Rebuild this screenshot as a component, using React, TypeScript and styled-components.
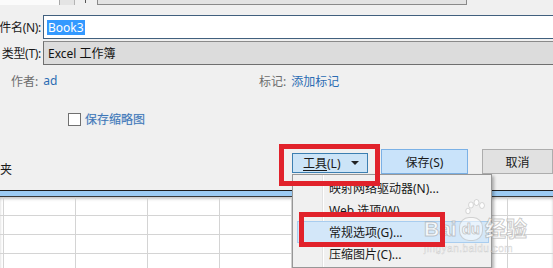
import styled, { createGlobalStyle } from 'styled-components'

const GlobalStyle = createGlobalStyle`
	html, body {
		margin: 0;
		padding: 0;
		background: #ffffff;
	}
	body {
		font-family: 'Noto Sans', 'Noto Sans CJK SC', sans-serif;
		font-size: 12px;
		color: #1a1a1a;
	}
`

const menuItems = ['映射网络驱动器(N)...', 'Web 选项(W)...', '常规选项(G)...', '压缩图片(C)...']

const App = (): JSX.Element => {
	return (
		<Page>
			<GlobalStyle />
			<Dialog>
				<TopStrip>
					<StripWhite />
					<StripButton />
					<StripArrow />
					<StripBox />
				</TopStrip>

				<FieldRow $first>
					<FieldLabel>件名(N):</FieldLabel>
					<NameInput>
						<Selected>Book3</Selected>
					</NameInput>
				</FieldRow>

				<FieldRow>
					<FieldLabel>类型(T):</FieldLabel>
					<TypeSelect>Excel 工作簿</TypeSelect>
				</FieldRow>

				<MetaRow>
					<MetaField $width={248}>
						<MetaLabel>作者:</MetaLabel>
						<MetaLink>ad</MetaLink>
					</MetaField>
					<MetaField>
						<MetaLabel>标记:</MetaLabel>
						<MetaLink>添加标记</MetaLink>
					</MetaField>
				</MetaRow>

				<CheckRow>
					<CheckBox />
					<CheckLabel>保存缩略图</CheckLabel>
				</CheckRow>

				<Footer>
					<HideFolders>夹</HideFolders>
					<ToolsButton>
						<ToolsText>工具</ToolsText>(L)
						<Caret />
					</ToolsButton>
					<SaveButton>保存(S)</SaveButton>
					<CancelButton>取消</CancelButton>
				</Footer>
			</Dialog>

			<Band />

			<Sheet>
				{Array.from({ length: 45 }).map((_, i) => (
					<Cell key={i} />
				))}
			</Sheet>

			<Menu>
				{menuItems.map((item, i) => (
					<MenuItem key={item} $active={i === 2}>
						{item}
					</MenuItem>
				))}
			</Menu>

			<Watermark>
				<Paw viewBox="0 0 24 24">
					<ellipse cx="7" cy="7" rx="2.4" ry="3" />
					<ellipse cx="12.5" cy="4.5" rx="2.4" ry="3" />
					<ellipse cx="18" cy="7.5" rx="2.4" ry="3" />
					<ellipse cx="4" cy="13" rx="2.2" ry="2.8" />
				</Paw>
				<WatermarkBrand>
					Bai<DuMark>du</DuMark>经验
				</WatermarkBrand>
				<WatermarkUrl>jingyan.baidu.com</WatermarkUrl>
			</Watermark>

			<RedFrame $left={279} $top={144} $width={101} $height={42} />
			<RedFrame $left={299} $top={212} $width={146} $height={35} />
		</Page>
	)
}

export default App

const Page = styled.div`
	position: relative;
	width: 553px;
	height: 268px;
	overflow: hidden;
	background: #ffffff;
`

const Dialog = styled.div`
	height: 190px;
	background: #f0f0f0;
	display: flex;
	flex-direction: column;
`

const TopStrip = styled.div`
	display: flex;
	height: 5px;
	align-items: stretch;
`

const StripWhite = styled.div`
	width: 59px;
	background: #fbfbfb;
	border-right: 1px solid #a8a8a8;
`

const StripButton = styled.div`
	width: 14px;
	background: #e4e4e4;
	border-right: 1px solid #b4b4b4;
`

const StripArrow = styled.div`
	width: 20px;
	display: flex;
	justify-content: center;

	&::before {
		content: '';
		width: 1px;
		height: 3px;
		background: #555;
	}
`

const StripBox = styled.div`
	width: 368px;
	margin-left: 2px;
	background: #e3e3e3;
	border: 1px solid #8a8a8a;
	border-top: none;
`

const FieldRow = styled.div<{ $first?: boolean }>`
	display: grid;
	grid-template-columns: 43px 1fr;
	height: 24px;
	margin-top: ${(p) => (p.$first ? '10px' : '2px')};
`

const FieldLabel = styled.div`
	display: flex;
	justify-content: flex-end;
	align-items: center;
	padding-right: 2px;
	white-space: nowrap;
	font-size: 12px;
	letter-spacing: -0.3px;
	color: #1a1a1a;
`

const NameInput = styled.div`
	display: flex;
	align-items: center;
	margin-right: -10px;
	padding-left: 3px;
	background: #ffffff;
	border: 1px solid #41607e;
	font-size: 12px;
`

const Selected = styled.span`
	background: #3399ff;
	color: #ffffff;
	padding: 1px 1px;
	line-height: 13px;
`

const TypeSelect = styled.div`
	display: flex;
	align-items: center;
	margin-right: -10px;
	padding-left: 4px;
	background: #dcdcdc;
	border: 1px solid #6f6f6f;
	border-top-color: #8a8a8a;
	font-size: 12px;
	color: #111;
`

const MetaRow = styled.div`
	display: flex;
	align-items: center;
	height: 20px;
	margin-top: 6px;
	padding-left: 11px;
`

const MetaField = styled.div<{ $width?: number }>`
	display: flex;
	gap: 5px;
	width: ${(p) => (p.$width ? `${p.$width}px` : 'auto')};
	white-space: nowrap;
`

const MetaLabel = styled.span`
	color: #6d6d6d;
`

const MetaLink = styled.span`
	color: #2b6cb3;
`

const CheckRow = styled.div`
	display: flex;
	align-items: center;
	gap: 4px;
	height: 20px;
	margin-top: 18px;
	padding-left: 68px;
`

const CheckBox = styled.div`
	width: 13px;
	height: 13px;
	box-sizing: border-box;
	border: 1px solid #707070;
	background: #ffffff;
`

const CheckLabel = styled.span`
	color: #3f77b8;
	text-shadow: 0 0 1px rgba(80, 140, 210, 0.35);
`

const Footer = styled.div`
	display: grid;
	grid-template-columns: 292px 89px 101px 71px;
	height: 25px;
	margin-top: 20px;
`

const HideFolders = styled.div`
	align-self: end;
	margin-bottom: -4px;
	white-space: nowrap;
	color: #1a1a1a;
	line-height: 16px;
`

const BaseButton = styled.div`
	display: flex;
	align-items: center;
	justify-content: center;
	box-sizing: border-box;
	font-size: 12px;
	color: #1a1a1a;
	white-space: nowrap;
`

const ToolsButton = styled(BaseButton)`
	position: relative;
	justify-content: flex-start;
	width: 76px;
	height: 20px;
	margin-top: 4px;
	padding-left: 10px;
	background: #cce4f7;
	border: 1px solid #3c7fb1;
`

const ToolsText = styled.span`
	text-decoration: underline;
	text-underline-offset: 2px;
`

const Caret = styled.span`
	position: absolute;
	right: 8px;
	top: 7px;
	width: 0;
	height: 0;
	border-left: 4px solid transparent;
	border-right: 4px solid transparent;
	border-top: 4px solid #222;
`

const SaveButton = styled(BaseButton)`
	width: 87px;
	height: 25px;
	background: #c9e3fa;
	border: 1px solid #7bb1e6;
`

const CancelButton = styled(BaseButton)`
	width: 71px;
	height: 25px;
	background: #e1e1e1;
	border: 1px solid #adadad;
`

const Band = styled.div`
	height: 5px;
	background: #9ccbf3;
	border-top: 1px solid #1e1e1e;
	border-bottom: 1px solid #3a3a3a;
`

const Sheet = styled.div`
	display: grid;
	grid-template-columns: 4px repeat(8, 72px);
	grid-auto-rows: 19px;
	box-shadow: inset 0 2px 3px rgba(0, 0, 0, 0.22);
`

const Cell = styled.div`
	box-sizing: border-box;
	border-right: 1px solid #d4d4d4;
	border-bottom: 1px solid #d4d4d4;
`

const Menu = styled.div`
	position: absolute;
	left: 292px;
	top: 174px;
	width: 200px;
	box-sizing: border-box;
	padding: 2px 0;
	background: linear-gradient(
			to right,
			transparent 29px,
			#e2e2e2 29px,
			#e2e2e2 30px,
			#ffffff 30px,
			#ffffff 31px,
			transparent 31px
		),
		#f0f0f0;
	border: 1px solid #979797;
	box-shadow: 2px 2px 3px rgba(0, 0, 0, 0.3);
`

const MenuItem = styled.div<{ $active?: boolean }>`
	display: flex;
	align-items: center;
	height: 22px;
	box-sizing: border-box;
	margin: 0 2px 0 4px;
	padding-left: 31px;
	font-size: 12px;
	color: #1a1a1a;
	white-space: nowrap;
	border: 1px solid ${(p) => (p.$active ? '#a9cdef' : 'transparent')};
	background: ${(p) => (p.$active ? '#d3e7f9' : 'transparent')};
`

const Watermark = styled.div`
	position: absolute;
	left: 424px;
	top: 198px;
	pointer-events: none;
	display: flex;
	flex-direction: column;
	align-items: flex-start;
	white-space: nowrap;
`

const Paw = styled.svg`
	width: 24px;
	height: 24px;
	margin-left: 40px;
	margin-bottom: -5px;
	fill: rgba(255, 255, 255, 0.85);
	stroke: rgba(150, 150, 150, 0.45);
	stroke-width: 0.8;
`

const WatermarkBrand = styled.div`
	display: flex;
	align-items: center;
	font-family: 'Liberation Sans', 'Noto Sans CJK SC', sans-serif;
	font-size: 21px;
	font-weight: bold;
	line-height: 22px;
	color: rgba(255, 255, 255, 0.8);
	-webkit-text-stroke: 1px rgba(140, 140, 140, 0.45);
`

const DuMark = styled.span`
	font-size: 15px;
	margin: 0 2px;
	padding: 0 2px;
	border: 1px solid rgba(150, 150, 150, 0.4);
	border-radius: 10px;
	background: rgba(255, 255, 255, 0.5);
`

const WatermarkUrl = styled.div`
	margin-top: 2px;
	font-family: 'Liberation Sans', sans-serif;
	font-size: 10px;
	letter-spacing: 0.5px;
	color: rgba(255, 255, 255, 0.8);
	-webkit-text-stroke: 0.5px rgba(150, 150, 150, 0.4);
`

const RedFrame = styled.div<{ $left: number; $top: number; $width: number; $height: number }>`
	position: absolute;
	left: ${(p) => p.$left}px;
	top: ${(p) => p.$top}px;
	width: ${(p) => p.$width}px;
	height: ${(p) => p.$height}px;
	box-sizing: border-box;
	border: 5px solid #e1222b;
	pointer-events: none;
`
